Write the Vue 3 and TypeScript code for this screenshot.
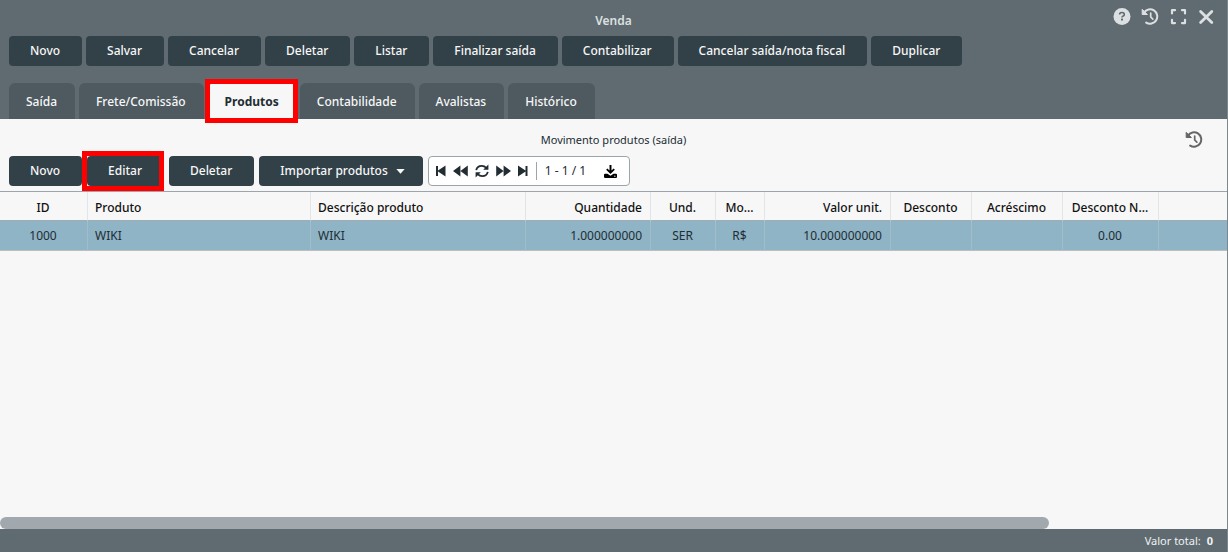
<script setup lang="ts">
import { ref } from 'vue'

interface Column {
  key: string
  label: string
  width: number
  align: 'left' | 'center' | 'right'
}

const actions: string[] = [
  'Novo', 'Salvar', 'Cancelar', 'Deletar', 'Listar', 'Finalizar saída',
  'Contabilizar', 'Cancelar saída/nota fiscal', 'Duplicar',
]

const tabs: string[] = ['Saída', 'Frete/Comissão', 'Produtos', 'Contabilidade', 'Avalistas', 'Histórico']
const activeTab = ref('Produtos')

const columns: Column[] = [
  { key: 'id', label: 'ID', width: 88, align: 'center' },
  { key: 'produto', label: 'Produto', width: 223, align: 'left' },
  { key: 'descricao', label: 'Descrição produto', width: 215, align: 'left' },
  { key: 'quantidade', label: 'Quantidade', width: 125, align: 'right' },
  { key: 'und', label: 'Und.', width: 65, align: 'center' },
  { key: 'moeda', label: 'Mo...', width: 49, align: 'center' },
  { key: 'valor', label: 'Valor unit.', width: 126, align: 'right' },
  { key: 'desconto', label: 'Desconto', width: 81, align: 'center' },
  { key: 'acrescimo', label: 'Acréscimo', width: 91, align: 'center' },
  { key: 'descontoNota', label: 'Desconto N...', width: 96, align: 'center' },
]

const rows: Record<string, string>[] = [
  {
    id: '1000', produto: 'WIKI', descricao: 'WIKI', quantidade: '1.000000000', und: 'SER',
    moeda: 'R$', valor: '10.000000000', desconto: '', acrescimo: '', descontoNota: '0.00',
  },
]
</script>

<template>
  <main class="window">
    <header class="head">
      <div class="titlebar">
        <h1>Venda</h1>
        <div class="tools">
          <button type="button" aria-label="Ajuda">
            <svg width="18" height="18" viewBox="0 0 18 18">
              <circle cx="9" cy="8.5" r="8.5" fill="currentColor" />
              <path d="M6.7 6.5V5.4Q7.4 4.5 9 4.5q2.3 0 2.3 1.9 0 1.1-1.2 1.7-1.1.5-1.1 1.4" fill="none" stroke="#5f6b70" stroke-width="1.6" />
              <rect x="8" y="10.6" width="2" height="2" rx=".6" fill="#5f6b70" />
            </svg>
          </button>
          <button type="button" aria-label="Histórico">
            <svg width="18" height="18" viewBox="0 0 18 18">
              <path d="M3 4.6A7.2 7.2 0 1 1 5.2 14.6" fill="none" stroke="currentColor" stroke-width="2" stroke-linecap="round" />
              <path d="M1.2 1.3v5.2h5.2z" fill="currentColor" stroke="currentColor" stroke-linejoin="round" />
              <path d="M9.7 5v3.8l2.2 2.4" fill="none" stroke="currentColor" stroke-width="1.7" stroke-linecap="round" />
            </svg>
          </button>
          <button type="button" aria-label="Tela cheia">
            <svg width="18" height="18" viewBox="0 0 18 18">
              <path d="M3 5.5V2.2H6M13 2.2h3V5.5M16 11.8v3.3H13M6 15.1H3V11.8" fill="none" stroke="currentColor" stroke-width="2.2" stroke-linecap="round" stroke-linejoin="round" />
            </svg>
          </button>
          <button type="button" aria-label="Fechar">
            <svg width="18" height="18" viewBox="0 0 18 18">
              <path d="M3.6 3.4l11.2 11.2M14.8 3.4L3.6 14.6" fill="none" stroke="currentColor" stroke-width="2.8" stroke-linecap="round" />
            </svg>
          </button>
        </div>
      </div>
      <div class="actions">
        <button v-for="action in actions" :key="action" type="button" class="btn">{{ action }}</button>
      </div>
      <nav class="tabs" role="tablist">
        <button
          v-for="tab in tabs"
          :key="tab"
          type="button"
          role="tab"
          class="tab"
          :class="{ active: tab === activeTab, marked: tab === 'Produtos' }"
          :aria-selected="tab === activeTab"
          @click="activeTab = tab"
        >{{ tab }}</button>
      </nav>
    </header>

    <section class="content">
      <div class="subtitle">
        <h2>Movimento produtos (saída)</h2>
        <button type="button" class="history" aria-label="Histórico de produtos">
          <svg width="18" height="18" viewBox="0 0 18 18">
            <path d="M3 4.6A7.2 7.2 0 1 1 5.2 14.6" fill="none" stroke="currentColor" stroke-width="2" stroke-linecap="round" />
            <path d="M1.2 1.3v5.2h5.2z" fill="currentColor" stroke="currentColor" stroke-linejoin="round" />
            <path d="M9.7 5v3.8l2.2 2.4" fill="none" stroke="currentColor" stroke-width="1.7" stroke-linecap="round" />
          </svg>
        </button>
      </div>

      <div class="toolbar">
        <button type="button" class="btn">Novo</button>
        <button type="button" class="btn marked">Editar</button>
        <button type="button" class="btn">Deletar</button>
        <button type="button" class="btn menu">
          Importar produtos
          <svg width="9" height="5" viewBox="0 0 9 5"><path d="M.3 0h8.4L4.5 4.8z" fill="currentColor" /></svg>
        </button>
        <div class="pager">
          <button type="button" aria-label="Primeira página">
            <svg width="10" height="12" viewBox="0 0 10 12"><path d="M0 1h2v4.6L9.5.6v10.8L2 6.4V11H0z" fill="currentColor" /></svg>
          </button>
          <button type="button" aria-label="Página anterior">
            <svg width="15" height="12" viewBox="0 0 15 12"><path d="M0 6L7.4.5v11zM7.4 6l7.4-5.5v11z" fill="currentColor" /></svg>
          </button>
          <button type="button" aria-label="Atualizar">
            <svg width="14" height="14" viewBox="0 0 14 14">
              <path d="M1.2 6.1C1.8 3.4 4.2 1.8 6.8 1.8c2 0 3.3.8 4.5 2.1M12.8 7.9c-.6 2.7-3 4.3-5.6 4.3-2 0-3.3-.8-4.5-2.1" fill="none" stroke="currentColor" stroke-width="1.8" />
              <path d="M13.4.6v5.2H8.2zM.6 13.4V8.2h5.2z" fill="currentColor" />
            </svg>
          </button>
          <button type="button" aria-label="Próxima página">
            <svg width="15" height="12" viewBox="0 0 15 12"><path d="M15 6L7.6.5v11zM7.6 6L.2.5v11z" fill="currentColor" /></svg>
          </button>
          <button type="button" aria-label="Última página">
            <svg width="10" height="12" viewBox="0 0 10 12"><path d="M9.5 1h-2v4.6L0 .6v10.8l7.5-5V11h2z" fill="currentColor" /></svg>
          </button>
          <span class="count">1 - 1 / 1</span>
          <button type="button" class="download" aria-label="Baixar">
            <svg width="13" height="13" viewBox="0 0 12 12">
              <path d="M5.1 0h1.8v5l2-1.8 1.1 1.2L6 8.2 2 4.4l1.1-1.2 2 1.8z" fill="currentColor" />
              <path d="M1 8h2.2L6 10l2.8-2H11q1 0 1 1v2q0 1-1 1H1q-1 0-1-1V9q0-1 1-1z" fill="currentColor" />
              <circle cx="10" cy="10.3" r=".6" fill="#fff" />
            </svg>
          </button>
        </div>
      </div>

      <div class="grid">
        <table>
          <colgroup>
            <col v-for="col in columns" :key="col.key" :style="{ width: col.width + 'px' }">
            <col>
          </colgroup>
          <thead>
            <tr>
              <th v-for="col in columns" :key="col.key" scope="col" :class="col.align">{{ col.label }}</th>
              <td class="rest"></td>
            </tr>
          </thead>
          <tbody>
            <tr v-for="row in rows" :key="row.id">
              <td v-for="col in columns" :key="col.key" :class="col.align">{{ row[col.key] }}</td>
              <td class="rest"></td>
            </tr>
          </tbody>
        </table>
      </div>
      <div class="scroll"><div class="thumb"></div></div>
    </section>

    <footer>Valor total: <strong>0</strong></footer>
  </main>
</template>

<style>
body {
  background: #5f6b70;
}
</style>

<style scoped>
.window {
  display: flex;
  flex-direction: column;
  box-sizing: border-box;
  min-height: 100vh;
  border-right: 1px solid #7d888d;
  background: #5f6b70;
  color: #222d32;
  font: 12px/18px "Noto Sans", "Open Sans", sans-serif;
}
button {
  margin: 0;
  padding: 0;
  border: 0;
  background: none;
  color: inherit;
  font: inherit;
  cursor: pointer;
}
svg {
  display: block;
}
h1,
h2 {
  margin: 0;
  text-align: center;
}
.titlebar {
  display: grid;
  grid-template-columns: 1fr auto 1fr;
  height: 36px;
  color: #dce0e2;
}
h1 {
  grid-column: 2;
  padding-top: 12px;
  font-size: 12px;
  line-height: 18px;
  font-weight: 600;
}
.tools {
  display: flex;
  justify-content: flex-end;
  align-items: flex-start;
  gap: 10px;
  padding: 8px 12px 0 0;
}
.actions {
  display: flex;
  gap: 4px;
  padding: 0 9px;
}
.btn {
  height: 30px;
  padding: 0 22px 0 21px;
  border-radius: 4px;
  background: #324148;
  color: #f7f7f7;
  font-weight: 500;
  white-space: nowrap;
}
.tabs {
  display: flex;
  gap: 4px;
  padding: 17px 9px 0;
}
.tab {
  height: 36px;
  padding: 2px 18px 0 17px;
  border-radius: 6px 6px 0 0;
  background: #4e5a60;
  color: #f7f7f7;
  font-weight: 500;
}
.tab.active {
  padding-right: 17px;
  background: #f7f7f7;
  color: #222d32;
  font-weight: 700;
}
.marked {
  position: relative;
}
.marked::after {
  content: "";
  position: absolute;
  z-index: 1;
  inset: -4px -2px -4px -3px;
  border: 5px solid #f00;
}
.btn.marked::after {
  inset: -5px 0 -5px -5px;
}
.content {
  display: flex;
  flex: 1;
  flex-direction: column;
  background: #f7f7f7;
}
.subtitle {
  display: grid;
  grid-template-columns: 1fr auto 1fr;
  align-items: center;
  height: 37px;
  padding-top: 4px;
  box-sizing: border-box;
}
h2 {
  grid-column: 2;
  font-size: 11px;
  line-height: 18px;
  font-weight: 400;
}
.history {
  justify-self: end;
  margin-right: 24px;
  color: #666;
}
.toolbar {
  display: flex;
  gap: 5px;
  padding: 0 9px 5px;
}
.menu {
  display: flex;
  align-items: center;
  gap: 8px;
  padding-right: 18px;
}
.pager {
  display: flex;
  align-items: center;
  gap: 7px;
  box-sizing: border-box;
  height: 30px;
  padding: 0 12px 0 7px;
  border: 1px solid #9ba5ab;
  border-radius: 4px;
  background: #fff;
}
.count {
  margin-left: 1px;
  padding-left: 8px;
  border-left: 1px solid #9ba5ab;
}
.download {
  margin-left: 11px;
  color: #000;
}
.grid {
  flex: 1;
}
table {
  width: 100%;
  border-top: 1px solid #9ba5ab;
  border-spacing: 0;
  table-layout: fixed;
}
th,
td {
  height: 29px;
  padding: 0 8px 0 7px;
  border-right: 1px solid #e2e5e7;
  border-bottom: 1px solid #bcbfc0;
  box-sizing: border-box;
  white-space: nowrap;
  overflow: hidden;
}
th {
  padding-top: 3px;
  color: #111;
  font-weight: 500;
}
thead th,
thead td {
  border-bottom-color: #9fadb3;
}
tbody td {
  height: 30px;
  border-right-color: #a0bdc9;
  background: #8fb4c6;
}
td.rest {
  padding: 0;
  border-right: 0;
}
.left {
  text-align: left;
}
.center {
  text-align: center;
}
.right {
  text-align: right;
}
.thumb {
  width: 85.5%;
  height: 12px;
  border-radius: 6px;
  background: #a1a9af;
}
footer {
  display: flex;
  justify-content: flex-end;
  gap: 6px;
  height: 23px;
  padding-right: 14px;
  color: #f0f2f3;
  font-size: 11px;
  line-height: 24px;
}
</style>
